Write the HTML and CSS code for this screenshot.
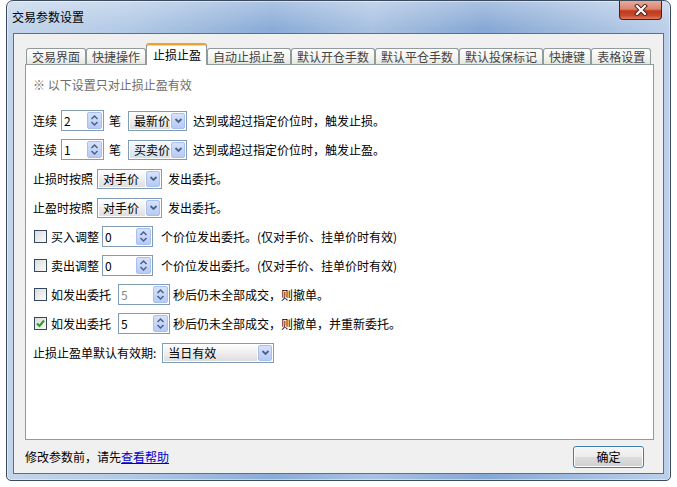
FILE: index.html
```html
<!DOCTYPE html>
<html lang="zh-CN">
  <head>
    <meta charset="utf-8" />
    <title>交易参数设置</title>
    <link rel="stylesheet" href="styles.css">
  </head>
  <body>
    <div class="window">
      <div class="titlebar">
        <span class="title">交易参数设置</span>
        <span class="close">
          <svg width="14" height="12" viewBox="0 0 14 12">
            <path d="M3 2 L11 10 M11 2 L3 10" stroke="#4a1a12" stroke-width="4" stroke-linecap="square" fill="none"/>
            <path d="M3 2 L11 10 M11 2 L3 10" stroke="#fff" stroke-width="2.2" stroke-linecap="square" fill="none"/>
          </svg>
        </span>
      </div>
      <div class="client">
        <div class="tabs">
          <span class="tab">交易界面</span>
          <span class="tab">快捷操作</span>
          <span class="tab active">止损止盈</span>
          <span class="tab">自动止损止盈</span>
          <span class="tab">默认开仓手数</span>
          <span class="tab">默认平仓手数</span>
          <span class="tab">默认投保标记</span>
          <span class="tab">快捷键</span>
          <span class="tab">表格设置</span>
        </div>
        <div class="panel">
          <p class="note">※ 以下设置只对止损止盈有效</p>

          <div class="row">
            <span class="gap-4">连续</span>
            <span class="spin gap-5"><span class="spin-val">2</span><span class="spin-btn"><svg width="9" height="13" viewBox="0 0 9 13"><path d="M1.5 5 L4.5 2 L7.5 5 M1.5 8 L4.5 11 L7.5 8" stroke="#4d6185" stroke-width="1.5" fill="none"/></svg></span></span>
            <span class="gap-7">笔</span>
            <span class="select w-59 gap-6"><span class="select-val">最新价</span><span class="select-btn"><svg width="9" height="7" viewBox="0 0 9 7"><path d="M1.5 2 L4.5 5 L7.5 2" stroke="#4d6185" stroke-width="1.8" fill="none"/></svg></span></span>
            <span>达到或超过指定价位时，触发止损。</span>
          </div>

          <div class="row">
            <span class="gap-4">连续</span>
            <span class="spin gap-5"><span class="spin-val">1</span><span class="spin-btn"><svg width="9" height="13" viewBox="0 0 9 13"><path d="M1.5 5 L4.5 2 L7.5 5 M1.5 8 L4.5 11 L7.5 8" stroke="#4d6185" stroke-width="1.5" fill="none"/></svg></span></span>
            <span class="gap-7">笔</span>
            <span class="select w-59 gap-6 hot"><span class="select-val">买卖价</span><span class="select-btn"><svg width="9" height="7" viewBox="0 0 9 7"><path d="M1.5 2 L4.5 5 L7.5 2" stroke="#4d6185" stroke-width="1.8" fill="none"/></svg></span></span>
            <span>达到或超过指定价位时，触发止盈。</span>
          </div>

          <div class="row">
            <span class="gap-4">止损时按照</span>
            <span class="select w-65 gap-6"><span class="select-val">对手价</span><span class="select-btn"><svg width="9" height="7" viewBox="0 0 9 7"><path d="M1.5 2 L4.5 5 L7.5 2" stroke="#4d6185" stroke-width="1.8" fill="none"/></svg></span></span>
            <span>发出委托。</span>
          </div>

          <div class="row">
            <span class="gap-4">止盈时按照</span>
            <span class="select w-65 gap-6"><span class="select-val">对手价</span><span class="select-btn"><svg width="9" height="7" viewBox="0 0 9 7"><path d="M1.5 2 L4.5 5 L7.5 2" stroke="#4d6185" stroke-width="1.8" fill="none"/></svg></span></span>
            <span>发出委托。</span>
          </div>

          <div class="row">
            <span class="check gap-4"></span>
            <span class="gap-3">买入调整</span>
            <span class="spin w-51 gap-8"><span class="spin-val">0</span><span class="spin-btn"><svg width="9" height="13" viewBox="0 0 9 13"><path d="M1.5 5 L4.5 2 L7.5 5 M1.5 8 L4.5 11 L7.5 8" stroke="#4d6185" stroke-width="1.5" fill="none"/></svg></span></span>
            <span>个价位发出委托。(仅对手价、挂单价时有效)</span>
          </div>

          <div class="row">
            <span class="check gap-4"></span>
            <span class="gap-3">卖出调整</span>
            <span class="spin w-51 gap-8"><span class="spin-val">0</span><span class="spin-btn"><svg width="9" height="13" viewBox="0 0 9 13"><path d="M1.5 5 L4.5 2 L7.5 5 M1.5 8 L4.5 11 L7.5 8" stroke="#4d6185" stroke-width="1.5" fill="none"/></svg></span></span>
            <span>个价位发出委托。(仅对手价、挂单价时有效)</span>
          </div>

          <div class="row">
            <span class="check gap-4"></span>
            <span class="gap-7">如发出委托</span>
            <span class="spin w-52 gap-3 disabled"><span class="spin-val">5</span><span class="spin-btn"><svg width="9" height="13" viewBox="0 0 9 13"><path d="M1.5 5 L4.5 2 L7.5 5 M1.5 8 L4.5 11 L7.5 8" stroke="#4d6185" stroke-width="1.5" fill="none"/></svg></span></span>
            <span>秒后仍未全部成交，则撤单。</span>
          </div>

          <div class="row">
            <span class="check checked gap-4"><svg width="11" height="11" viewBox="0 0 11 11"><path d="M2 5.5 L4.5 8 L9 2.5" stroke="#22a022" stroke-width="2" fill="none"/></svg></span>
            <span class="gap-7">如发出委托</span>
            <span class="spin w-52 gap-3"><span class="spin-val">5</span><span class="spin-btn"><svg width="9" height="13" viewBox="0 0 9 13"><path d="M1.5 5 L4.5 2 L7.5 5 M1.5 8 L4.5 11 L7.5 8" stroke="#4d6185" stroke-width="1.5" fill="none"/></svg></span></span>
            <span>秒后仍未全部成交，则撤单，并重新委托。</span>
          </div>

          <div class="row">
            <span class="gap-6">止损止盈单默认有效期:</span>
            <span class="select w-112"><span class="select-val">当日有效</span><span class="select-btn"><svg width="9" height="7" viewBox="0 0 9 7"><path d="M1.5 2 L4.5 5 L7.5 2" stroke="#4d6185" stroke-width="1.8" fill="none"/></svg></span></span>
          </div>
        </div>
        <div class="footer">
          <span>修改参数前，请先<a href="#" class="help">查看帮助</a></span>
          <button type="button" class="ok">确定</button>
        </div>
      </div>
    </div>
  </body>
</html>
```

FILE: styles.css
```css
:root {
  --field-border: #7f9db9;
  --tab-border: #919b9c;
  --arrow-blue: #4d6185;
}

body {
  margin: 0;
  background-color: #fff;
  font-family: "Noto Sans CJK SC", "Noto Sans", sans-serif;
  font-size: 12px;
  line-height: 14px;
  color: #000;
}

.window {
  width: 665px;
  height: 481px;
  margin-left: 6px;
  box-sizing: border-box;
  border: 1px solid #3b4a5c;
  border-radius: 7px 7px 5px 5px;
  padding: 0 6px 6px;
  display: flex;
  flex-direction: column;
  background:
    linear-gradient(180deg, rgba(255, 255, 255, 0.3), rgba(255, 255, 255, 0) 28px),
    linear-gradient(90deg, #c3d5eb 0%, #b3cae6 18%, #8aacd7 40%, #a9c2e2 55%, #86a8d4 72%, #bcd0ea 100%);
  box-shadow: inset 0 0 0 1px rgba(255, 255, 255, 0.45);
}

.titlebar {
  height: 32px;
  display: flex;
  align-items: center;
  justify-content: space-between;
}

.title {
  margin-left: -1px;
}

.close {
  align-self: flex-start;
  width: 43px;
  height: 19px;
  margin-right: 2px;
  box-sizing: border-box;
  border: 1px solid #4b1f17;
  border-top: none;
  border-radius: 0 0 4px 4px;
  background: linear-gradient(#e8aa9a, #d98570 45%, #c23a1d 55%, #c7492b 80%, #df7a5b);
  display: flex;
  align-items: center;
  justify-content: center;
}

.client {
  flex: 1;
  background-color: #f0f0f0;
  border: 1px solid #5f7085;
  padding: 9px 9px 0 11px;
  display: flex;
  flex-direction: column;
}

.tabs {
  display: flex;
  align-items: flex-end;
  height: 22px;
  margin: 0 0 -1px 1px;
  position: relative;
  z-index: 1;
}

.tab {
  height: 16px;
  margin-bottom: 1px;
  box-sizing: border-box;
  padding: 0 5px;
  border: 1px solid var(--tab-border);
  border-bottom: none;
  border-radius: 3px 3px 0 0;
  background: linear-gradient(#fefefe, #f3f3ef 60%, #e6e6e0);
  color: #444;
  line-height: 15px;
  white-space: nowrap;
}

.tab.active {
  height: 22px;
  margin-bottom: 0;
  padding: 0 5px 0 6px;
  background: #fff;
  color: #000;
  border-top: 2px solid #eca22c;
  box-shadow: inset 0 1px 0 #ffd27c;
  line-height: 19px;
}

.panel {
  flex: 1;
  background-color: #fff;
  border: 1px solid var(--tab-border);
  padding: 13px 7px 0;
  display: flex;
  flex-direction: column;
  gap: 8px;
}

.note {
  margin: 0 0 10px;
  color: #6d6d6d;
}

.row {
  display: flex;
  align-items: center;
  height: 21px;
  white-space: nowrap;
}

.gap-3 { margin-right: 3px; }
.gap-4 { margin-right: 4px; }
.gap-5 { margin-right: 5px; }
.gap-6 { margin-right: 6px; }
.gap-7 { margin-right: 7px; }
.gap-8 { margin-right: 8px; }

.spin {
  display: flex;
  width: 43px;
  height: 21px;
  box-sizing: border-box;
  border: 1px solid var(--field-border);
  background-color: #fff;
}

.w-51 { width: 51px; }
.w-52 { width: 52px; }
.w-59 { width: 59px; }
.w-65 { width: 65px; }
.w-112 { width: 112px; }

.spin-val {
  flex: 1;
  padding-left: 2px;
  line-height: 19px;
}

.spin.disabled .spin-val {
  color: #8a8a8a;
}

.spin-btn {
  width: 15px;
  margin: 1px;
  box-sizing: border-box;
  border: 1px solid #a9bfee;
  border-radius: 2px;
  background: linear-gradient(#d6e2fc, #b6caf5);
  display: flex;
  align-items: center;
  justify-content: center;
}

.select {
  display: flex;
  height: 20px;
  box-sizing: border-box;
  border: 1px solid var(--field-border);
  background-color: #fff;
}

.select-val {
  flex: 1;
  margin: 1px;
  padding-left: 4px;
  line-height: 16px;
  background: linear-gradient(#fdfdfd, #eeeeee 50%, #dedede);
}

.select.hot .select-val {
  background: linear-gradient(#f4f8fc, #e3ecf5 50%, #d3e0ec);
}

.select-btn {
  width: 14px;
  margin: 1px 1px 1px 0;
  box-sizing: border-box;
  border: 1px solid #a9bfee;
  border-radius: 2px;
  background: linear-gradient(#d6e2fc, #b6caf5);
  display: flex;
  align-items: center;
  justify-content: center;
}

.check {
  width: 13px;
  height: 13px;
  margin-left: 1px;
  box-sizing: border-box;
  border: 1px solid #33475e;
  background: linear-gradient(135deg, #dcdcd8, #fbfbfb);
  display: flex;
  align-items: center;
  justify-content: center;
}

.footer {
  height: 33px;
  display: flex;
  align-items: center;
  justify-content: space-between;
  padding-right: 10px;
}

.help {
  color: #0000cc;
  text-decoration: underline;
}

.ok {
  width: 71px;
  height: 22px;
  font-family: inherit;
  font-size: 12px;
  color: #000;
  border: 1px solid #3c7fb1;
  border-radius: 3px;
  background: linear-gradient(#f6f6f6, #ebebeb 50%, #dddddd 51%, #cfcfcf);
  box-shadow: inset 0 0 0 1px #fdfdfd;
  padding: 0;
}
```
